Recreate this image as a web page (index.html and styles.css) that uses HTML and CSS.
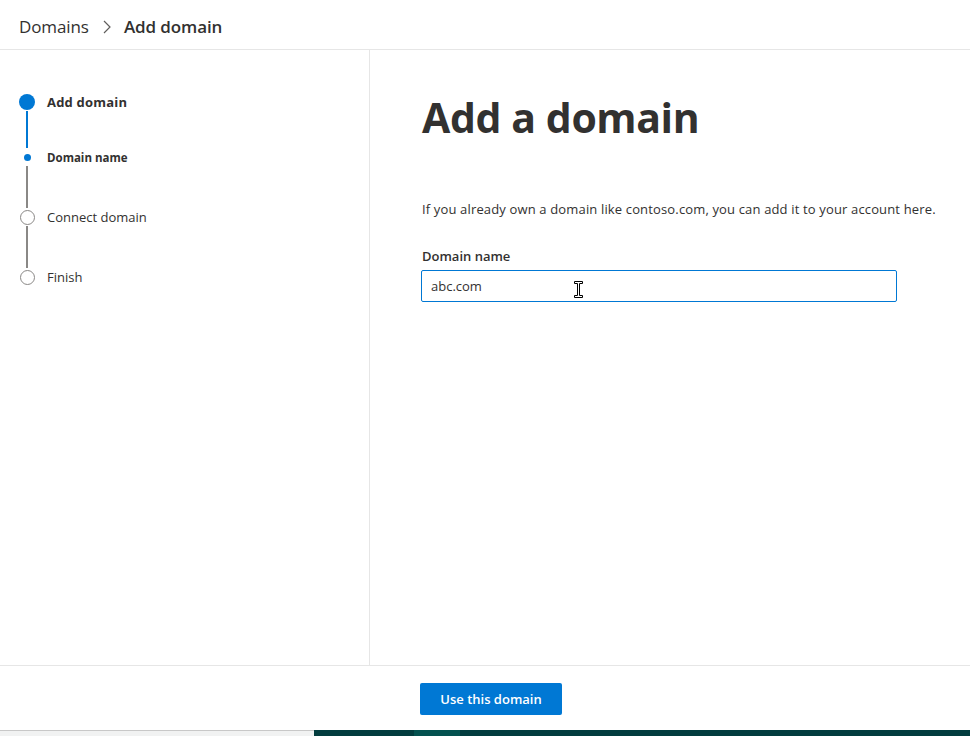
FILE: index.html
```html
<!DOCTYPE html>
<html lang="en">
<head>
<meta charset="utf-8">
<title>Add domain</title>
<link rel="stylesheet" href="styles.css">
</head>
<body>
<div class="app">
  <header class="header">
    <span class="crumb">Domains</span>
    <svg class="chev" width="10" height="16" viewBox="0 0 10 16"><path d="M2 2 L8 8 L2 14" fill="none" stroke="#605e5c" stroke-width="1.2"/></svg>
    <span class="crumb current">Add domain</span>
  </header>
  <div class="main">
    <nav class="steps">
      <div class="step">
        <div class="marker"><span class="dot-big"></span></div>
        <span class="step-label bold">Add domain</span>
      </div>
      <div class="line blue"></div>
      <div class="step sub">
        <div class="marker"><span class="dot-small"></span></div>
        <span class="step-label sub-label">Domain name</span>
      </div>
      <div class="line"></div>
      <div class="step">
        <div class="marker"><span class="ring"></span></div>
        <span class="step-label">Connect domain</span>
      </div>
      <div class="line"></div>
      <div class="step">
        <div class="marker"><span class="ring"></span></div>
        <span class="step-label">Finish</span>
      </div>
    </nav>
    <section class="content">
      <h1 class="title">Add a domain</h1>
      <p class="desc">If you already own a domain like contoso.com, you can add it to your account here.</p>
      <label class="field-label" for="dn">Domain name</label>
      <div class="field">
        <input id="dn" class="input" type="text" value="abc.com">
        <svg class="ibeam" width="9" height="17" viewBox="0 0 9 17"><path d="M0.5 0.5 H8.5 V2.5 H5.5 V14.5 H8.5 V16.5 H0.5 V14.5 H3.5 V2.5 H0.5 Z" fill="#fff" stroke="#000" stroke-width="1"/></svg>
      </div>
    </section>
  </div>
  <footer class="footer">
    <button class="primary">Use this domain</button>
  </footer>
  <div class="taskbar">
    <div class="tb-left"></div>
    <div class="tb-right"><span class="tb-tab"></span></div>
  </div>
</div>
</body>
</html>
```
FILE: styles.css
```css
* { box-sizing: border-box; }
html, body { margin: 0; padding: 0; }
body {
  font-family: "Segoe UI", "Open Sans", "Noto Sans", sans-serif;
  color: #323130;
  background: #fff;
  width: 970px;
  height: 736px;
  overflow: hidden;
}
.app {
  display: flex;
  flex-direction: column;
  height: 736px;
}
.header {
  height: 50px;
  border-bottom: 1px solid #e6e6e6;
  display: flex;
  align-items: center;
  padding: 4px 0 0 19px;
  flex: none;
}
.crumb {
  font-size: 17px;
  color: #323130;
  letter-spacing: -0.1px;
}
.crumb.current { font-weight: 600; }
.chev { margin: 0 12px 0 13px; }
.main {
  flex: 1;
  display: flex;
  min-height: 0;
}
.steps {
  width: 370px;
  border-right: 1px solid #e6e6e6;
  padding: 43px 0 0 19px;
  display: flex;
  flex-direction: column;
  flex: none;
}
.step {
  display: flex;
  align-items: center;
  height: 18px;
}
.marker {
  width: 16px;
  height: 18px;
  display: flex;
  align-items: center;
  justify-content: center;
  margin-right: 12px;
}
.dot-big {
  width: 16px; height: 16px; border-radius: 50%;
  background: #0078d4;
}
.dot-small {
  width: 7px; height: 7px; border-radius: 50%;
  background: #0078d4;
}
.ring {
  width: 15px; height: 15px; border-radius: 50%;
  border: 1.6px solid #8a8886;
}
.line {
  width: 2px;
  height: 42px;
  background: #8a8886;
  margin-left: 7px;
}
.line.blue { background: #0078d4; height: 37px; }
.step-label {
  font-size: 13px;
  color: #323130;
}
.step-label.bold { font-weight: 700; letter-spacing: 0.2px; }
.step-label.sub-label { font-size: 11.5px; font-weight: 700; }
.content {
  flex: 1;
  padding: 38px 0 0 52px;
}
.title {
  margin: 0;
  font-size: 41px;
  font-weight: 700;
  line-height: 58px;
  color: #323130;
  letter-spacing: -0.4px;
}
.desc {
  margin: 54px 0 0;
  font-size: 13px;
  line-height: 18px;
  color: #323130;
  letter-spacing: 0.15px;
}
.field-label {
  display: block;
  margin-top: 29px;
  font-size: 13px;
  font-weight: 600;
  line-height: 18px;
}
.field {
  position: relative;
  margin-top: 5px;
  margin-left: -1px;
  width: 476px;
}
.input {
  display: block;
  width: 476px;
  height: 32px;
  border: 1px solid #0078d4;
  border-radius: 2px;
  padding: 0 9px;
  font-family: inherit;
  font-size: 13px;
  color: #323130;
  outline: none;
}
.ibeam {
  position: absolute;
  left: 153px;
  top: 11px;
}
.footer {
  height: 65px;
  border-top: 1px solid #e6e6e6;
  display: flex;
  justify-content: center;
  padding: 17px 0 0 12px;
  flex: none;
}
.primary {
  width: 142px;
  height: 32px;
  background: #0078d4;
  color: #fff;
  border: none;
  border-radius: 2px;
  font-family: inherit;
  font-size: 13px;
  font-weight: 600;
}
.taskbar {
  height: 6px;
  display: flex;
  flex: none;
}
.tb-left {
  width: 314px;
  background: #f1f2f2;
  border-top: 1px solid #c8c8c8;
}
.tb-right {
  flex: 1;
  background: #023c3e;
  padding-left: 100px;
}
.tb-tab {
  display: block;
  width: 46px;
  height: 100%;
  background: #03514f;
}
```
